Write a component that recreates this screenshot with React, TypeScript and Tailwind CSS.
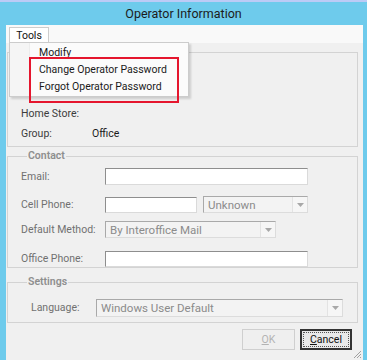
import type { ReactNode } from "react";

const font = { fontFamily: 'Roboto, "Noto Sans", Arial, sans-serif' };

function Arrow() {
  return (
    <div className="flex h-full w-[15px] items-center justify-center border-l border-[#e3e3e3] bg-[#f6f6f6]">
      <svg width="7" height="4" viewBox="0 0 7 4">
        <path d="M0 0 H7 L3.5 4 Z" fill="#a8a8a8" />
      </svg>
    </div>
  );
}

function Combo({ text, className }: { text: string; className: string }) {
  return (
    <div
      className={`flex items-center border border-[#a9a9a9] border-r-[#dcdcdc] border-b-[#dcdcdc] bg-[#f3f3f3] ${className}`}
    >
      <span className="flex-1 truncate pl-[4px] text-[11.5px] leading-[14px] text-[#8b8b8b]">{text}</span>
      <Arrow />
    </div>
  );
}

function Input({ className }: { className: string }) {
  return (
    <div
      className={`border border-[#8e8e8e] border-r-[#dadada] border-b-[#dadada] bg-white ${className}`}
    />
  );
}

function Row({ label, children, className }: { label: string; children: ReactNode; className: string }) {
  return (
    <div className={`flex items-center ${className}`}>
      <span className="w-[84px] shrink-0 text-[10.5px] text-[#707070]">{label}</span>
      {children}
    </div>
  );
}

function Group({ title, className, children }: { title: string; className: string; children: ReactNode }) {
  return (
    <fieldset className={`border border-[#d3d3d3] pl-[13px] ${className}`}>
      <legend className="ml-[6px] px-[1px] text-[10.5px] font-semibold leading-[14px] text-[#8e8e8e]">
        {title}
      </legend>
      {children}
    </fieldset>
  );
}

export default function App() {
  return (
    <div className="relative h-[360px] w-[367px] overflow-hidden bg-[#6ecbec]" style={font}>
      <div className="h-[2px] bg-[#bccbf6]" />
      <div className="flex h-[23px] items-center justify-center pt-[1px] text-[12.5px] text-[#1c1c1c]">
        Operator Information
      </div>

      <div className="ml-[6px] mr-[4px] flex h-[335px] flex-col bg-[#f0f0f0]">
        <div className="h-[18px] bg-[#f9f9f9] pl-[3px] pt-[2px]">
          <div className="flex h-[16px] w-[40px] items-center justify-center border border-b-0 border-[#cdcdcd] bg-white text-[10.5px] text-[#111]">
            Tools
          </div>
        </div>

        <div className="mt-[9px] ml-[1px] mr-[5px] h-[97px] border border-[#d3d3d3] pl-[13px] pt-[51px] text-[10.5px] text-[#3c3c3c]">
          <div className="h-[20px] leading-[20px]">Home Store:</div>
          <div className="flex h-[20px] items-center">
            <span className="w-[71px]">Group:</span>
            <span className="text-[#1a1a1a]">Office</span>
          </div>
        </div>

        <Group title="Contact" className="mt-[2px] ml-[1px] mr-[5px] h-[120px]">
          <Row label="Email:" className="mt-[5px] h-[17px]">
            <Input className="h-[17px] w-[203px]" />
          </Row>
          <Row label="Cell Phone:" className="mt-[11px] h-[17px]">
            <Input className="h-[16px] w-[92px]" />
            <Combo text="Unknown" className="ml-[6px] h-[17px] w-[105px]" />
          </Row>
          <Row label="Default Method:" className="mt-[8px] h-[17px]">
            <Combo text="By Interoffice Mail" className="h-[17px] w-[171px]" />
          </Row>
          <Row label="Office Phone:" className="mt-[13px] h-[16px]">
            <Input className="h-[16px] w-[203px]" />
          </Row>
        </Group>

        <Group title="Settings" className="mt-[7px] ml-[1px] mr-[5px] h-[50px]">
          <div className="mt-[10px] flex h-[18px] items-center">
            <span className="w-[75px] pl-[10px] text-[10.5px] text-[#707070]">Language:</span>
            <Combo text="Windows User Default" className="h-[18px] w-[247px]" />
          </div>
        </Group>

        <div className="mt-[6px] mr-[11px] flex justify-end gap-[5px]">
          <div className="flex h-[21px] w-[53px] items-center justify-center border border-[#cfcfcf] bg-[#efefef] text-[10.5px] text-[#b3b3b3]">
            <span>
              <span className="underline">O</span>K
            </span>
          </div>
          <div className="flex h-[21px] w-[52px] items-center justify-center border-2 border-[#333] bg-[#e9e9e9] p-[1px]">
            <div className="flex h-full w-full items-center justify-center border border-dotted border-[#555] text-[10.5px] text-[#111]">
              <span>
                <span className="underline">C</span>ancel
              </span>
            </div>
          </div>
        </div>

        <div className="mt-auto flex justify-end pb-[1px] pr-[1px]">
          <svg width="9" height="9" viewBox="0 0 9 9">
            <path d="M8 1 L1 8 M8 4 L4 8 M8 7 L7 8" stroke="#a0a0a0" strokeWidth="1" />
          </svg>
        </div>
      </div>

      <div className="absolute left-[9px] top-[42px] flex h-[55px] w-[180px] border border-[#cccccc] bg-[#fbfbfb] shadow-[2px_2px_2px_rgba(0,0,0,0.15)]">
        <div className="w-[20px] border-r border-[#ececec] bg-[#f5f5f5]" />
        <div className="flex flex-col pl-[9px] pt-[1px] text-[10.5px] leading-[17px] text-[#1a1a1a]">
          <span>Modify</span>
          <span>Change Operator Password</span>
          <span>Forgot Operator Password</span>
        </div>
      </div>

      <div className="absolute left-[29px] top-[57px] h-[46px] w-[150px] border-2 border-[#e5162e]" />
    </div>
  );
}
